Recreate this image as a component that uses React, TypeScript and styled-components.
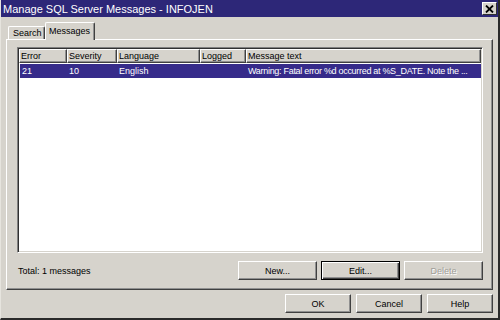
import React from "react";
import styled, { createGlobalStyle } from "styled-components";

const GlobalStyle = createGlobalStyle`
  html, body { margin: 0; padding: 0; background: #d6d3cc; }
  body { font-family: "Liberation Sans", Arial, sans-serif; }
  * { box-sizing: border-box; }
`;

const Window = styled.div`
  width: 500px;
  height: 320px;
  background: #d6d3cc;
  border-left: 1px solid #e6e4de;
  border-right: 2px solid #2a2a2a;
  border-bottom: 2px solid #2a2a2a;
  display: flex;
  flex-direction: column;
  font-family: "Liberation Sans", Arial, sans-serif;
  font-size: 9px;
  color: #000;
  overflow: hidden;
`;

const TitleBar = styled.div`
  height: 17px;
  flex: none;
  background: #2d2778;
  color: #fff;
  display: flex;
  align-items: center;
  justify-content: space-between;
  padding: 0 1px 0 2px;
  font-size: 11px;
`;

const CloseBtn = styled.div`
  width: 15px;
  height: 13px;
  background: #d6d3cc;
  border-top: 1px solid #fff;
  border-left: 1px solid #fff;
  border-right: 1px solid #303030;
  border-bottom: 1px solid #303030;
  display: flex;
  align-items: center;
  justify-content: center;
`;

const Body = styled.div`
  flex: 1;
  display: flex;
  flex-direction: column;
  padding: 5px;
`;

const TabRow = styled.div`
  height: 17px;
  display: flex;
  align-items: flex-end;
  padding-left: 2px;
`;

const Tab = styled.div<{ $active?: boolean }>`
  position: relative;
  z-index: ${(p) => (p.$active ? 1 : 0)};
  height: ${(p) => (p.$active ? 18 : 13)}px;
  margin-bottom: ${(p) => (p.$active ? -1 : 0)}px;
  width: ${(p) => (p.$active ? 50 : 37)}px;
  background: #d6d3cc;
  border-top: 1px solid #fff;
  border-left: 1px solid #fff;
  border-right: 1px solid #404040;
  border-radius: 2px 2px 0 0;
  box-shadow: inset -1px 0 0 #909090;
  display: flex;
  align-items: ${(p) => (p.$active ? "flex-start" : "center")};
  padding: ${(p) => (p.$active ? "3px 0 0 3px" : "0 0 0 4px")};
  font-size: 9px;
`;

const Panel = styled.div`
  height: 251px;
  flex: none;
  border-top: 1px solid #fff;
  border-left: 1px solid #fff;
  border-right: 1px solid #404040;
  border-bottom: 1px solid #404040;
  box-shadow: inset -1px -1px 0 #909090;
  display: flex;
  flex-direction: column;
  padding: 7px 9px 0 10px;
`;

const ListView = styled.div`
  height: 206px;
  flex: none;
  background: #fff;
  border-top: 1px solid #808080;
  border-left: 1px solid #808080;
  border-right: 1px solid #fff;
  border-bottom: 1px solid #fff;
  box-shadow: inset 1px 1px 0 #303030, inset -1px -1px 0 #d6d3cc;
  padding: 1px;
  display: flex;
  flex-direction: column;
`;

const HeaderRow = styled.div`
  display: flex;
  height: 14px;
`;

const HeaderCell = styled.div<{ $w?: number }>`
  ${(p) => (p.$w ? `width: ${p.$w}px; flex: none;` : "flex: 1;")}
  background: #d6d3cc;
  border-top: 1px solid #fff;
  border-left: 1px solid #fff;
  border-right: 1px solid #404040;
  border-bottom: 1px solid #404040;
  box-shadow: inset -1px -1px 0 #909090;
  padding-left: 1px;
  display: flex;
  align-items: center;
  font-size: 9px;
  white-space: nowrap;
  overflow: hidden;
`;

const DataRow = styled.div<{ $selected?: boolean }>`
  display: flex;
  height: 14px;
  margin-top: 1px;
  margin-left: 1px;
  background: ${(p) => (p.$selected ? "#362b8a" : "transparent")};
  color: ${(p) => (p.$selected ? "#fff" : "#000")};
`;

const DataCell = styled.div<{ $w?: number; $tight?: boolean }>`
  ${(p) => (p.$w ? `width: ${p.$w}px; flex: none;` : "flex: 1;")}
  padding-left: 2px;
  display: flex;
  align-items: center;
  font-size: 9px;
  letter-spacing: ${(p) => (p.$tight ? "-0.3px" : "0")};
  white-space: nowrap;
  overflow: hidden;
`;

const PanelFooter = styled.div`
  margin-top: 8px;
  height: 19px;
  display: flex;
  align-items: center;
  gap: 4px;
`;

const Total = styled.div`
  flex: 1;
  font-size: 9px;
  padding-left: 1px;
`;

const Button = styled.div<{ $default?: boolean; $disabled?: boolean; $w: number }>`
  width: ${(p) => p.$w}px;
  height: 19px;
  background: #d6d3cc;
  display: flex;
  align-items: center;
  justify-content: center;
  font-size: 9px;
  color: ${(p) => (p.$disabled ? "#a09e98" : "#000")};
  text-shadow: ${(p) => (p.$disabled ? "1px 1px 0 #fff" : "none")};
  border: 1px solid;
  border-color: ${(p) => (p.$default ? "#000" : "#fff #404040 #404040 #fff")};
  box-shadow: ${(p) =>
    p.$default
      ? "inset 1px 1px 0 #fff, inset -1px -1px 0 #404040, inset -2px -2px 0 #909090"
      : "inset -1px -1px 0 #909090"};
`;

const DialogButtons = styled.div`
  margin-top: 4px;
  height: 19px;
  display: flex;
  justify-content: flex-end;
  gap: 5px;
`;

const cols = [48, 50, 83, 46];

export default function App() {
  return (
    <>
      <GlobalStyle />
      <Window>
        <TitleBar>
          <span>Manage SQL Server Messages - INFOJEN</span>
          <CloseBtn>
            <svg width="9" height="8" viewBox="0 0 9 8">
              <path d="M1 0.5 L8 7.5 M8 0.5 L1 7.5" stroke="#000" strokeWidth="1.8" />
            </svg>
          </CloseBtn>
        </TitleBar>
        <Body>
          <TabRow>
            <Tab>Search</Tab>
            <Tab $active>Messages</Tab>
          </TabRow>
          <Panel>
            <ListView>
              <HeaderRow>
                <HeaderCell $w={cols[0]}>Error</HeaderCell>
                <HeaderCell $w={cols[1]}>Severity</HeaderCell>
                <HeaderCell $w={cols[2]}>Language</HeaderCell>
                <HeaderCell $w={cols[3]}>Logged</HeaderCell>
                <HeaderCell>Message text</HeaderCell>
              </HeaderRow>
              <DataRow $selected>
                <DataCell $w={cols[0] - 1}>21</DataCell>
                <DataCell $w={cols[1]}>10</DataCell>
                <DataCell $w={cols[2]}>English</DataCell>
                <DataCell $w={cols[3]}></DataCell>
                <DataCell $tight>Warning: Fatal error %d occurred at %S_DATE. Note the ...</DataCell>
              </DataRow>
            </ListView>
            <PanelFooter>
              <Total>Total: 1 messages</Total>
              <Button $w={79}>New...</Button>
              <Button $w={79} $default>Edit...</Button>
              <Button $w={79} $disabled>Delete</Button>
            </PanelFooter>
          </Panel>
          <DialogButtons>
            <Button $w={66}>OK</Button>
            <Button $w={66}>Cancel</Button>
            <Button $w={66}>Help</Button>
          </DialogButtons>
        </Body>
      </Window>
    </>
  );
}
